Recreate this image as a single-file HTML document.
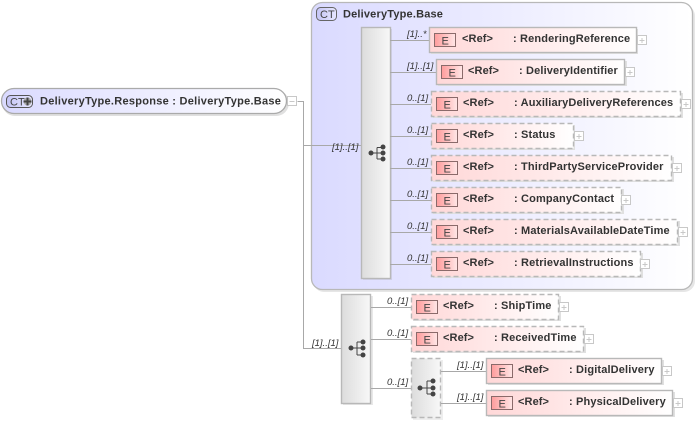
<!DOCTYPE html>
<html><head><meta charset="utf-8">
<style>
html,body{margin:0;padding:0;background:#fff;width:698px;height:423px;overflow:hidden}
svg{display:block;filter:blur(.35px)}
text{font-family:"Liberation Sans",Arial,sans-serif;fill:#333}
.n{font-size:11px;font-weight:bold;letter-spacing:.15px}
.r{font-size:11px;font-weight:bold;letter-spacing:.1px}
.e{font-size:11px;fill:#444}
.c{font-size:9.5px;font-style:italic;fill:#333}
.box{stroke:#b8b8b8;stroke-width:1.4}
.d{stroke-dasharray:5 3}
.l{stroke:#a8a8a8;stroke-width:1;fill:none}
.sh{fill:#e0e0e0}
.p{fill:#fff;stroke:#c8c8c8}
.ps{stroke:#c8c8c8;fill:none}
.ei{fill:url(#ge);stroke:#8a6a6a}
.dot{fill:#444}
</style></head><body>
<svg width="698" height="423" viewBox="0 0 698 423" xmlns="http://www.w3.org/2000/svg">
<defs>
<linearGradient id="gct" x1="0" x2="1" y1="0" y2="0"><stop offset="0" stop-color="#dadaff"/><stop offset="1" stop-color="#fff"/></linearGradient>
<linearGradient id="gel" x1="0" x2="1" y1="0" y2="0"><stop offset="0" stop-color="#ffd8d8"/><stop offset=".35" stop-color="#ffe4e4"/><stop offset="1" stop-color="#fff"/></linearGradient>
<linearGradient id="gs" x1="0" x2="1" y1="0" y2="0"><stop offset="0" stop-color="#dcdcdc"/><stop offset="1" stop-color="#f8f8f8"/></linearGradient>
<linearGradient id="ge" x1="0" x2="1" y1="0" y2="0"><stop offset="0" stop-color="#ff9c9c"/><stop offset="1" stop-color="#ffe6e6"/></linearGradient>
<linearGradient id="gi" x1="0" x2="1" y1="0" y2="0"><stop offset="0" stop-color="#c4c4f6"/><stop offset="1" stop-color="#e8e8ff"/></linearGradient>
</defs>

<!-- outer connectors -->
<path class="l" d="M297.5 101.5H303.5V348.5H341M303.5 145.5H311"/>

<!-- root -->
<rect x="2" y="90" width="287" height="26" rx="13" fill="#e0e0e0"/>
<rect x="1.5" y="88.5" width="285" height="25" rx="12.5" fill="url(#gct)" stroke="#aaa" stroke-width="1.3"/>
<rect x="6.5" y="95.5" width="26" height="12" rx="4" fill="url(#gi)" stroke="#555"/>
<text x="10" y="105.5" style="font-size:11px;fill:#444">CT</text>
<circle cx="27.5" cy="101.5" r="4" fill="#aaa"/>
<path d="M23.5 101.5h8M27.5 97.5v8" stroke="#444" stroke-width="2"/>
<text class="r" x="40" y="104.5" textLength="241">DeliveryType.Response  : DeliveryType.Base</text>
<rect class="p" x="287.5" y="96.5" width="9" height="9"/><path class="ps" d="M289.5 101.5h5"/>

<!-- CT container -->
<rect x="313" y="5" width="382" height="287" rx="11" fill="#e6e6e6"/>
<rect x="311.5" y="2.5" width="381" height="287" rx="11" fill="url(#gct)" stroke="#b8b8b8" stroke-width="1.3"/>
<rect x="316.5" y="7.5" width="20" height="13" rx="4" fill="url(#gi)" stroke="#666"/>
<text x="320" y="18" style="font-size:11px;fill:#444">CT</text>
<text class="r" x="343" y="17.5" textLength="100">DeliveryType.Base</text>
<path class="l" d="M311 145.5H361"/>
<text class="c" x="332" y="150">[1]..[1]</text>

<!-- sequence 1 -->
<rect x="363" y="29" width="29" height="251" fill="#d0d0ea"/>
<rect x="361.5" y="27.5" width="29" height="251" fill="url(#gs)" class="box"/>
<g class="dot"><circle cx="371" cy="153" r="2.5"/><circle cx="383" cy="147" r="2.5"/><circle cx="383" cy="153" r="2.5"/><circle cx="383" cy="159" r="2.5"/></g>
<path d="M371 153h12M377 147.5v11.5M377 147.5h6M377 159h6" stroke="#444" fill="none"/>

<!-- lines seq1 -->
<path class="l" d="M390 40.5H430M390 72.5H436M390 104.5H431M390 136.5H431M390 168.5H431M390 200.5H431M390 232.5H431M390 264.5H431"/>
<text class="c" x="407" y="37">[1]..*</text>
<text class="c" x="407" y="69">[1]..[1]</text>
<text class="c" x="407" y="101">0..[1]</text>
<text class="c" x="407" y="133">0..[1]</text>
<text class="c" x="407" y="165">0..[1]</text>
<text class="c" x="407" y="197">0..[1]</text>
<text class="c" x="407" y="229">0..[1]</text>
<text class="c" x="407" y="261">0..[1]</text>

<!-- 1 -->
<rect x="431" y="29" width="207" height="25" class="sh"/>
<rect x="429.5" y="27.5" width="207" height="25" fill="url(#gel)" class="box"/>
<rect x="434.5" y="33.5" width="21" height="13" class="ei"/><text class="e" x="441.5" y="44.5">E</text>
<text class="r" x="462" y="42">&lt;Ref&gt;</text><text class="n" x="513" y="42">: RenderingReference</text>
<rect class="p" x="637.5" y="35.5" width="9" height="9"/><path class="ps" d="M639.5 40.5h5M642 38v5"/>
<!-- 2 -->
<rect x="438" y="61" width="189" height="25" class="sh"/>
<rect x="436.5" y="59.5" width="188" height="25" fill="url(#gel)" class="box"/>
<rect x="441.5" y="65.5" width="21" height="13" class="ei"/><text class="e" x="448.5" y="76.5">E</text>
<text class="r" x="468" y="74">&lt;Ref&gt;</text><text class="n" x="519" y="74">: DeliveryIdentifier</text>
<rect class="p" x="625.5" y="67.5" width="9" height="9"/><path class="ps" d="M627.5 72.5h5M630 70v5"/>
<!-- 3 -->
<rect x="433" y="93" width="250" height="25" class="sh"/>
<rect x="431.5" y="91.5" width="249" height="25" fill="url(#gel)" class="box d"/>
<rect x="436.5" y="97.5" width="21" height="13" class="ei"/><text class="e" x="443.5" y="108.5">E</text>
<text class="r" x="463" y="106">&lt;Ref&gt;</text><text class="n" x="514" y="106">: AuxiliaryDeliveryReferences</text>
<rect class="p" x="681.5" y="99.5" width="9" height="9"/><path class="ps" d="M683.5 104.5h5M686 102v5"/>
<!-- 4 -->
<rect x="433" y="125" width="142" height="25" class="sh"/>
<rect x="431.5" y="123.5" width="142" height="25" fill="url(#gel)" class="box d"/>
<rect x="436.5" y="129.5" width="21" height="13" class="ei"/><text class="e" x="443.5" y="140.5">E</text>
<text class="r" x="463" y="138">&lt;Ref&gt;</text><text class="n" x="514" y="138">: Status</text>
<rect class="p" x="574.5" y="131.5" width="9" height="9"/><path class="ps" d="M576.5 136.5h5M579 134v5"/>
<!-- 5 -->
<rect x="433" y="157" width="241" height="25" class="sh"/>
<rect x="431.5" y="155.5" width="240" height="25" fill="url(#gel)" class="box d"/>
<rect x="436.5" y="161.5" width="21" height="13" class="ei"/><text class="e" x="443.5" y="172.5">E</text>
<text class="r" x="463" y="170">&lt;Ref&gt;</text><text class="n" x="514" y="170">: ThirdPartyServiceProvider</text>
<rect class="p" x="672.5" y="163.5" width="9" height="9"/><path class="ps" d="M674.5 168.5h5M677 166v5"/>
<!-- 6 -->
<rect x="433" y="189" width="191" height="25" class="sh"/>
<rect x="431.5" y="187.5" width="190" height="25" fill="url(#gel)" class="box d"/>
<rect x="436.5" y="193.5" width="21" height="13" class="ei"/><text class="e" x="443.5" y="204.5">E</text>
<text class="r" x="463" y="202">&lt;Ref&gt;</text><text class="n" x="514" y="202">: CompanyContact</text>
<rect class="p" x="621.5" y="195.5" width="9" height="9"/><path class="ps" d="M623.5 200.5h5M626 198v5"/>
<!-- 7 -->
<rect x="433" y="221" width="247" height="25" class="sh"/>
<rect x="431.5" y="219.5" width="246" height="25" fill="url(#gel)" class="box d"/>
<rect x="436.5" y="225.5" width="21" height="13" class="ei"/><text class="e" x="443.5" y="236.5">E</text>
<text class="r" x="463" y="234">&lt;Ref&gt;</text><text class="n" x="514" y="234">: MaterialsAvailableDateTime</text>
<rect class="p" x="678.5" y="227.5" width="9" height="9"/><path class="ps" d="M680.5 232.5h5M683 230v5"/>
<!-- 8 -->
<rect x="433" y="253" width="210" height="25" class="sh"/>
<rect x="431.5" y="251.5" width="209" height="25" fill="url(#gel)" class="box d"/>
<rect x="436.5" y="257.5" width="21" height="13" class="ei"/><text class="e" x="443.5" y="268.5">E</text>
<text class="r" x="463" y="266">&lt;Ref&gt;</text><text class="n" x="514" y="266">: RetrievalInstructions</text>
<rect class="p" x="640.5" y="259.5" width="9" height="9"/><path class="ps" d="M642.5 264.5h5M645 262v5"/>

<!-- sequence 2 -->
<rect x="343" y="296" width="30" height="109" fill="#e8e8e8"/>
<rect x="341.5" y="294.5" width="29" height="109" fill="url(#gs)" class="box"/>
<g class="dot"><circle cx="351" cy="348" r="2.5"/><circle cx="363" cy="342" r="2.5"/><circle cx="363" cy="348" r="2.5"/><circle cx="363" cy="355" r="2.5"/></g>
<path d="M351 348h12M357 342v13M357 342h6M357 355h6" stroke="#444" fill="none"/>
<text class="c" x="312" y="346">[1]..[1]</text>
<path class="l" d="M371 307.5H411M371 339.5H411M371 388.5H411"/>
<text class="c" x="387" y="304">0..[1]</text>
<text class="c" x="387" y="336">0..[1]</text>
<text class="c" x="387" y="385">0..[1]</text>

<!-- 9 -->
<rect x="413" y="296" width="148" height="25" class="sh"/>
<rect x="411.5" y="294.5" width="147" height="25" fill="url(#gel)" class="box d"/>
<rect x="416.5" y="300.5" width="21" height="13" class="ei"/><text class="e" x="423.5" y="311.5">E</text>
<text class="r" x="443" y="309">&lt;Ref&gt;</text><text class="n" x="494" y="309">: ShipTime</text>
<rect class="p" x="559.5" y="302.5" width="9" height="9"/><path class="ps" d="M561.5 307.5h5M564 305v5"/>
<!-- 10 -->
<rect x="413" y="328" width="173" height="25" class="sh"/>
<rect x="411.5" y="326.5" width="172" height="25" fill="url(#gel)" class="box d"/>
<rect x="416.5" y="332.5" width="21" height="13" class="ei"/><text class="e" x="423.5" y="343.5">E</text>
<text class="r" x="443" y="341">&lt;Ref&gt;</text><text class="n" x="494" y="341">: ReceivedTime</text>
<rect class="p" x="584.5" y="334.5" width="9" height="9"/><path class="ps" d="M586.5 339.5h5M589 337v5"/>

<!-- sequence 3 -->
<rect x="413" y="360" width="30" height="60" fill="#eee"/>
<rect x="411.5" y="358.5" width="29" height="59" fill="url(#gs)" class="box d"/>
<g class="dot"><circle cx="420" cy="388" r="2.5"/><circle cx="433" cy="381" r="2.5"/><circle cx="433" cy="388" r="2.5"/><circle cx="433" cy="394" r="2.5"/></g>
<path d="M420 388h13M427 381v13M427 381h6M427 394h6" stroke="#444" fill="none"/>
<path class="l" d="M441 371.5H486M441 403.5H486"/>
<text class="c" x="457" y="368">[1]..[1]</text>
<text class="c" x="457" y="400">[1]..[1]</text>

<!-- 11 -->
<rect x="488" y="360" width="176" height="25" class="sh"/>
<rect x="486.5" y="358.5" width="175" height="25" fill="url(#gel)" class="box"/>
<rect x="491.5" y="364.5" width="21" height="13" class="ei"/><text class="e" x="498.5" y="375.5">E</text>
<text class="r" x="518" y="373">&lt;Ref&gt;</text><text class="n" x="569" y="373">: DigitalDelivery</text>
<rect class="p" x="662.5" y="366.5" width="9" height="9"/><path class="ps" d="M664.5 371.5h5M667 369v5"/>
<!-- 12 -->
<rect x="488" y="392" width="187" height="25" class="sh"/>
<rect x="486.5" y="390.5" width="186" height="25" fill="url(#gel)" class="box"/>
<rect x="491.5" y="396.5" width="21" height="13" class="ei"/><text class="e" x="498.5" y="407.5">E</text>
<text class="r" x="518" y="405">&lt;Ref&gt;</text><text class="n" x="569" y="405">: PhysicalDelivery</text>
<rect class="p" x="673.5" y="398.5" width="9" height="9"/><path class="ps" d="M675.5 403.5h5M678 401v5"/>
</svg>
</body></html>
